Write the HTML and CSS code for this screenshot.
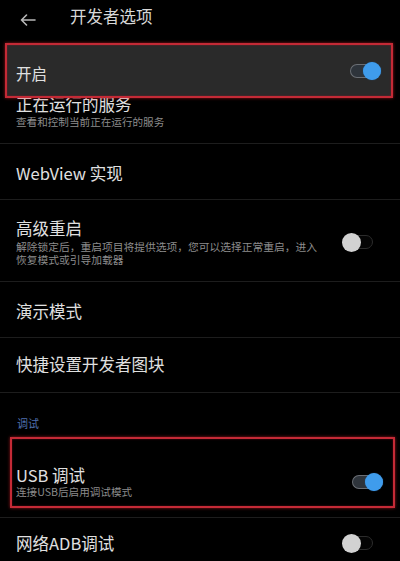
FILE: index.html
```html
<!DOCTYPE html>
<html lang="zh-CN">
<head>
<meta charset="utf-8">
<link rel="stylesheet" href="styles.css">
</head>
<body>
<div class="screen">
  <header class="appbar">
    <svg class="back" width="16" height="12" viewBox="0 0 16 12"><path d="M6.5 1 L1.5 6 L6.5 11 M1.5 6 H15" fill="none" stroke="#b8b8b8" stroke-width="1.6" stroke-linecap="round" stroke-linejoin="round"/></svg>
    <span class="appbar-title">开发者选项</span>
  </header>

  <div class="row box box-main">
    <span class="title title-main">开启</span>
    <span class="switch on"><span class="knob"></span></span>
  </div>

  <div class="row row-running">
    <div class="texts">
      <div class="title">正在运行的服务</div>
      <div class="sub sub-gap">查看和控制当前正在运行的服务</div>
    </div>
  </div>

  <div class="row simple divided">
    <span class="title">WebView 实现</span>
  </div>

  <div class="row row-reboot divided">
    <div class="texts">
      <div class="title">高级重启</div>
      <div class="sub sub-wrap">解除锁定后，重启项目将提供选项，您可以选择正常重启，进入<br>恢复模式或引导加载器</div>
    </div>
    <span class="switch off"><span class="knob"></span></span>
  </div>

  <div class="row simple divided">
    <span class="title">演示模式</span>
  </div>

  <div class="row simple simple-last divided">
    <span class="title">快捷设置开发者图块</span>
  </div>

  <div class="section divided">调试</div>

  <div class="row box box-usb">
    <div class="texts">
      <div class="title">USB 调试</div>
      <div class="sub">连接USB后启用调试模式</div>
    </div>
    <span class="switch on"><span class="knob"></span></span>
  </div>

  <div class="row row-adb divided">
    <span class="title">网络ADB调试</span>
    <span class="switch off"><span class="knob"></span></span>
  </div>
</div>
</body>
</html>
```
FILE: styles.css
```css
html, body {
  margin: 0;
  padding: 0;
  background: #000;
}
body {
  font-family: "Noto Sans CJK SC", "Noto Sans", "Liberation Sans", sans-serif;
  color: #dedede;
}
.screen {
  width: 400px;
  height: 561px;
  overflow: hidden;
  background: #000;
}
.appbar {
  height: 36px;
  padding: 5px 0 0 20px;
  box-sizing: border-box;
  display: flex;
  align-items: flex-start;
  margin-bottom: 7px;
}
.back {
  margin-top: 9px;
}
.appbar-title {
  margin-left: 34px;
  font-size: 16.5px;
  line-height: 22px;
  color: #d8d8d8;
}
.row {
  display: flex;
  align-items: center;
  justify-content: space-between;
  padding-left: 16px;
  padding-right: 27px;
}
.divided {
  border-top: 1px solid #1d1d1d;
}
.title {
  font-size: 16.5px;
  line-height: 20px;
  color: #e0e0e0;
}
.sub {
  font-size: 10.6px;
  line-height: 14px;
  color: #8c8c8c;
}
.sub-gap {
  margin-top: 1px;
}
.sub-wrap {
  white-space: nowrap;
  font-size: 10.75px;
  line-height: 13px;
  margin-top: 2px;
}
.box {
  border: 2px solid #c42a36;
  box-shadow: 0 0 3px rgba(210, 30, 40, 0.7), inset 0 0 2px rgba(210, 30, 40, 0.5);
  position: relative;
  z-index: 1;
}
.box-main {
  margin: 0 7px 0 5px;
  height: 55px;
  box-sizing: border-box;
  background: #2a2a2a;
  padding-left: 9px;
  padding-right: 10px;
}
.title-main {
  font-size: 15.5px;
  padding-top: 5px;
}
.row-running {
  margin-top: -4px;
  padding-bottom: 14px;
}
.simple {
  padding-top: 19px;
  padding-bottom: 16px;
}
.simple-last {
  padding-top: 16px;
  padding-bottom: 18px;
}
.row-reboot {
  padding-top: 18px;
  padding-bottom: 15px;
}
.section {
  padding: 23px 0 7px 17px;
  font-size: 11px;
  line-height: 14px;
  color: #4f6fae;
}
.box-usb {
  margin: 0 5px 9px 10px;
  padding: 26px 10px 7px 4px;
  background: #000;
}
.row-adb {
  padding-top: 15px;
  padding-bottom: 10px;
}
.switch {
  display: flex;
  align-items: center;
  width: 31px;
  height: 14px;
  border-radius: 7px;
  box-sizing: border-box;
  flex-shrink: 0;
}
.switch.on {
  justify-content: flex-end;
  background: #2e343b;
  border: 1.5px solid #6a6e74;
  border-right: none;
}
.switch.off {
  justify-content: flex-start;
  border: 1.5px solid #2c2c2c;
  background: #050505;
}
.knob {
  display: block;
  border-radius: 50%;
}
.switch.on .knob {
  width: 18px;
  height: 18px;
  background: #3f9cec;
  box-shadow: 0 0 1px #2a6fb0;
}
.switch.off .knob {
  width: 19px;
  height: 19px;
  background: #d2d2d2;
  margin-left: -1px;
}
```
